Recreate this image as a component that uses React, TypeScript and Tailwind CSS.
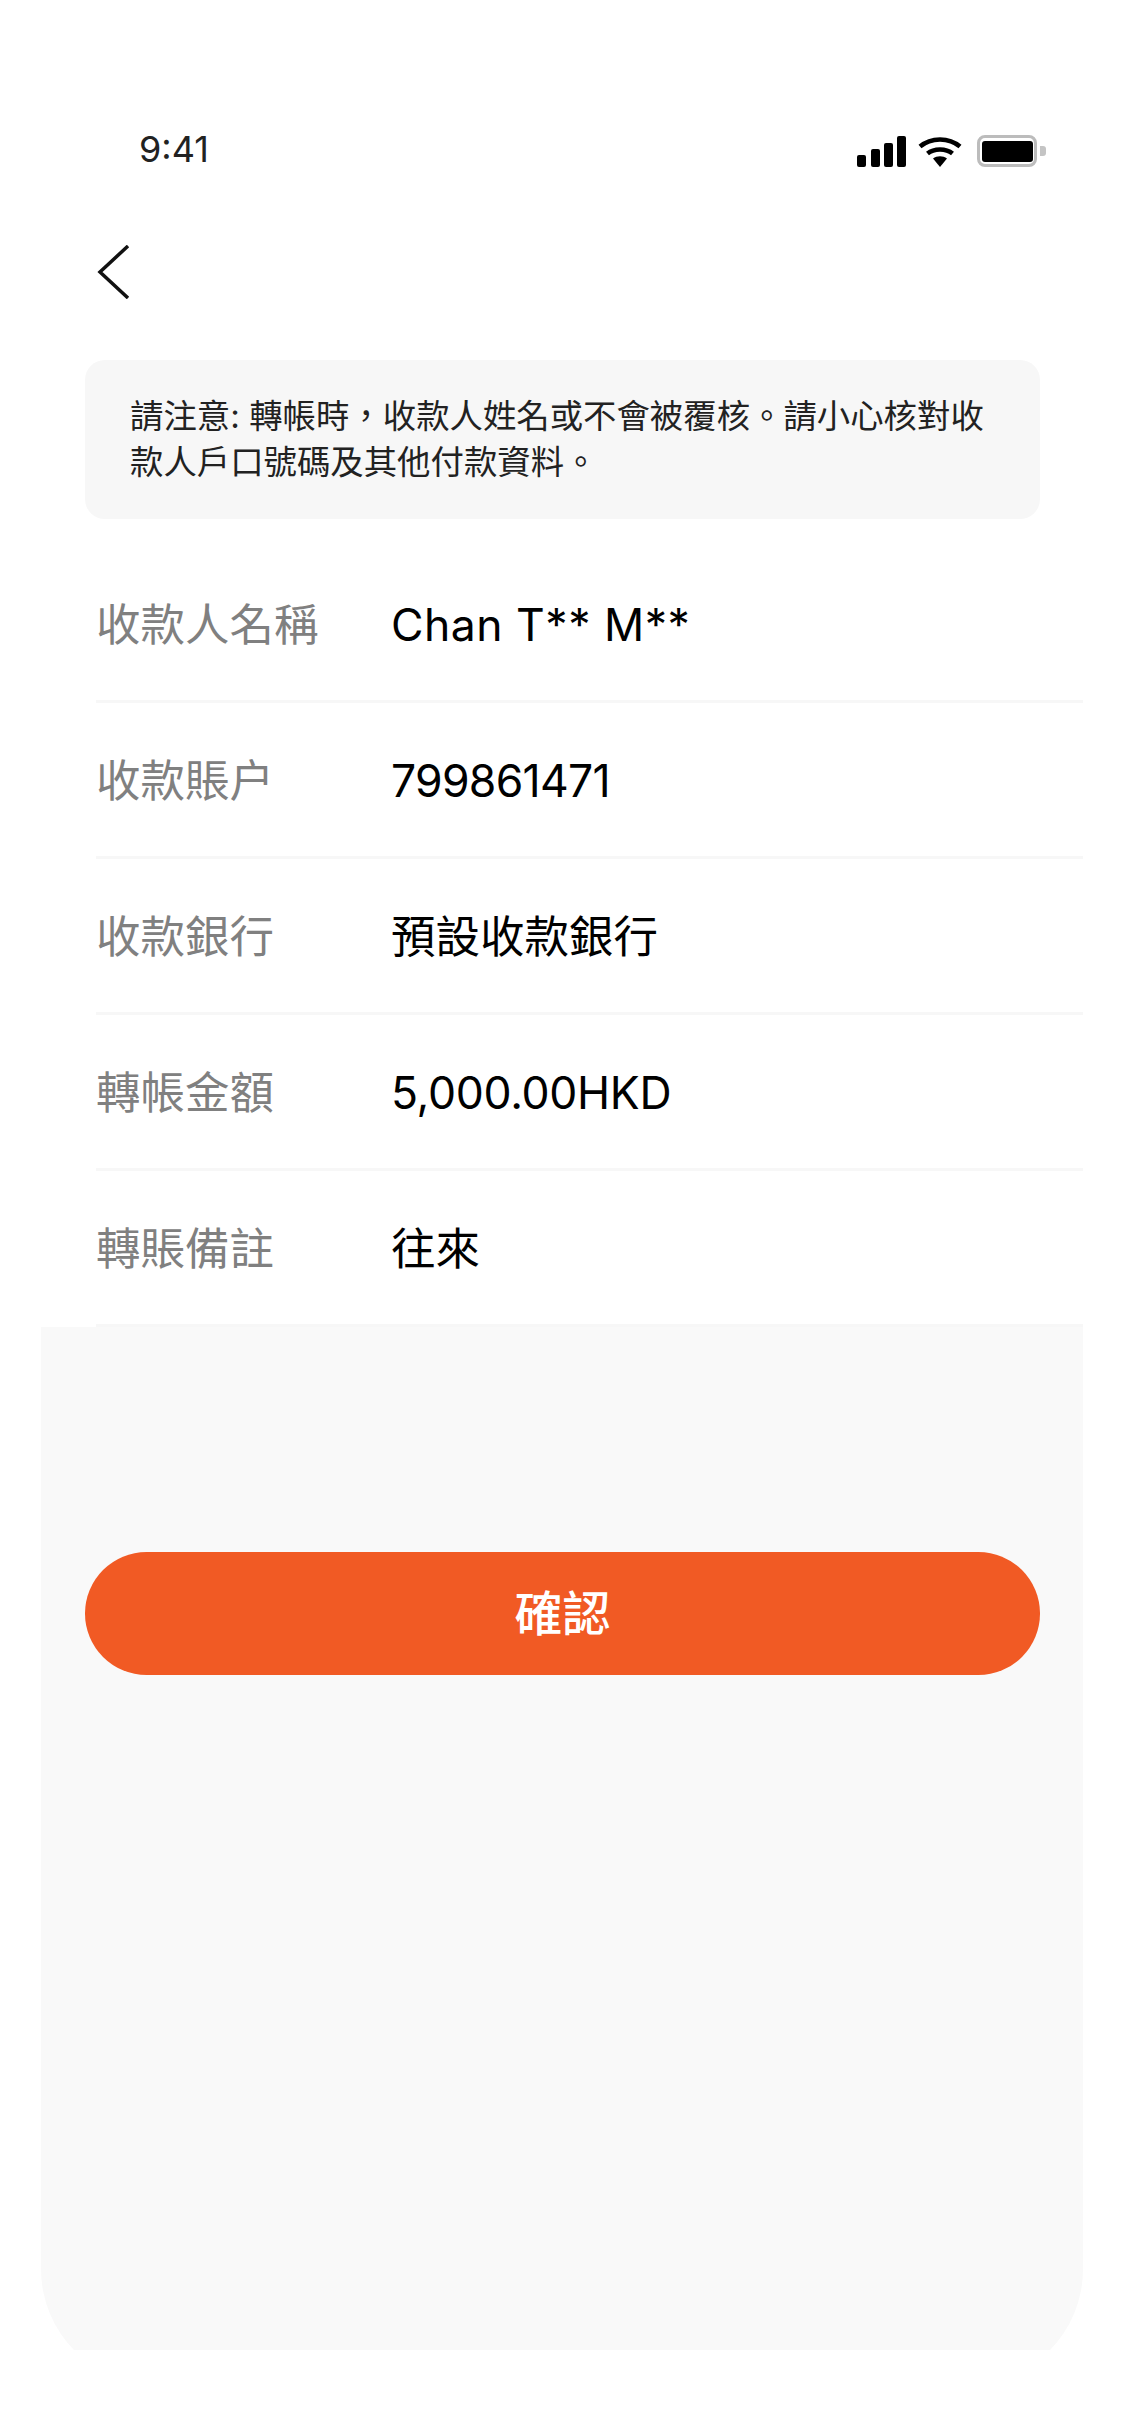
const rows = [
  { label: '收款人名稱', value: 'Chan T** M**', valueClass: 'tracking-[0.5px]' },
  { label: '收款賬户', value: '799861471', valueClass: 'tracking-[-0.7px]' },
  { label: '收款銀行', value: '預設收款銀行', valueClass: '' },
  { label: '轉帳金額', value: '5,000.00HKD', valueClass: 'tracking-[-0.3px]' },
  { label: '轉賬備註', value: '往來', valueClass: '' },
];

function StatusIcons() {
  return (
    <div className="flex items-center">
      {/* signal */}
      <svg width="49" height="32" viewBox="0 0 49 32" className="block">
        <rect x="0" y="20" width="9" height="12" rx="2" fill="#000" />
        <rect x="14" y="14" width="9" height="18" rx="2" fill="#000" />
        <rect x="27" y="8" width="9" height="24" rx="2" fill="#000" />
        <rect x="40" y="1" width="9" height="31" rx="2" fill="#000" />
      </svg>
      {/* wifi */}
      <svg width="44" height="32" viewBox="0 0 44 32" className="ml-[12px] block">
        <path d="M2 11.5C13 2 31 2 42 11.5" fill="none" stroke="#000" strokeWidth="4.5" />
        <path d="M9.5 18.5C16 13 28 13 34.5 18.5" fill="none" stroke="#000" strokeWidth="4.5" />
        <path d="M15 23.5C19 20.5 25 20.5 29 23.5L22 32Z" fill="#000" />
      </svg>
      {/* battery */}
      <div className="ml-[15px] flex h-[32px] w-[60px] items-center justify-center rounded-[8px] border-[3px] border-[#bcbcbc]">
        <div className="h-[21px] w-[51px] rounded-[3px] bg-black" />
      </div>
      <div className="ml-[3px] h-[10px] w-[6px] rounded-r-[3px] bg-[#c4c4c4]" />
    </div>
  );
}

export default function App() {
  return (
    <div className="flex h-[2436px] w-[1125px] flex-col bg-white font-['Inter','Noto_Sans_CJK_TC',sans-serif]">
      {/* status bar */}
      <div className="flex h-[135px] items-start justify-between pl-[139px] pr-[79px] pt-[126px]">
        <span className="text-[36px] leading-[46px] text-[#222]">9:41</span>
        <div className="pt-[9px]">
          <StatusIcons />
        </div>
      </div>

      {/* back */}
      <div className="mt-[110px] pl-[97px]">
        <svg width="34" height="54" viewBox="0 0 34 54" className="block">
          <path d="M31 1L3 27L31 53" fill="none" stroke="#111" strokeWidth="3.5" />
        </svg>
      </div>

      {/* notice */}
      <div className="mx-[85px] mt-[61px] h-[159px] rounded-[20px] bg-[#f7f7f7] px-[45px] pt-[33px] text-[33.4px] leading-[46px] text-[#222]">
        {'請注意: 轉帳時\uFF0C收款人姓名或不會被覆核。請小心核對收款人戶口號碼及其他付款資料。'}
      </div>

      {/* detail rows */}
      <div className="ml-[96px] mr-[42px] mt-[28px] flex flex-col">
        {rows.map((row) => (
          <div key={row.label} className="flex h-[156px] items-center border-b-[3px] border-[#f7f7f7] pt-[3px] text-[44.5px]">
            <span className="w-[295px] text-[#808080]">{row.label}</span>
            <span className={`text-black ${row.valueClass}`}>{row.value}</span>
          </div>
        ))}
      </div>

      {/* lower panel, cut off below the corner curve */}
      <div className="ml-[41px] mr-[42px] h-[1023px] overflow-hidden">
        <div className="h-[1058px] rounded-b-[116px] bg-[#f9f9f9] px-[44px] pt-[225px]">
          <button className="flex h-[123px] w-[955px] items-center justify-center rounded-[62px] bg-[#f15a24] text-[48px] font-medium text-white">
            確認
          </button>
        </div>
      </div>
    </div>
  );
}
